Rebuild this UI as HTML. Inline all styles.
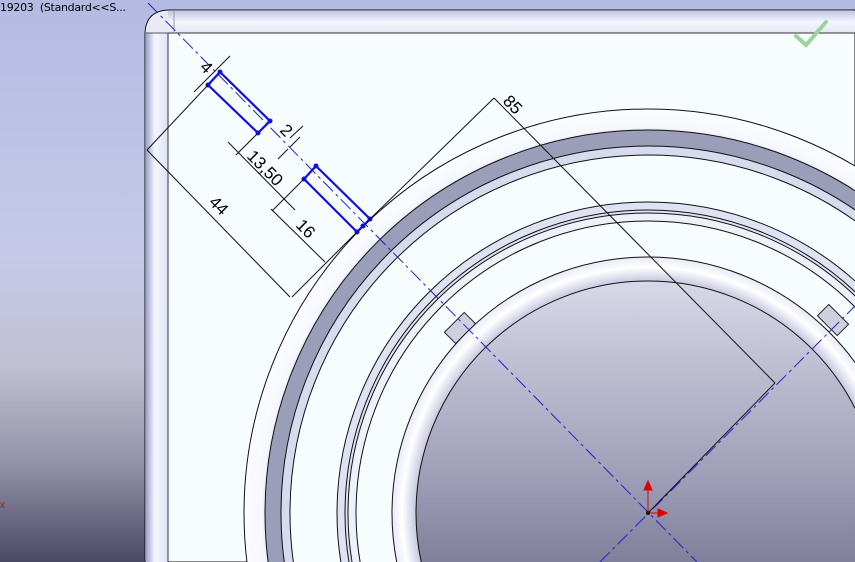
<!DOCTYPE html>
<html><head><style>
html,body{margin:0;padding:0;width:855px;height:562px;overflow:hidden}
body{position:relative;background:linear-gradient(#b4bae2 0%,#c6cae8 45%,#c0c0d4 65%,#9494aa 82%,#4a4a66 100%);font-family:"Liberation Sans",sans-serif}
svg{position:absolute;left:0;top:0;display:block;overflow:hidden}
.t{position:absolute;left:0;top:2px;font-size:11px;color:#000;font-family:"DejaVu Sans",sans-serif;letter-spacing:-0.3px;line-height:12px}
</style></head><body>
<svg width="855" height="562" viewBox="0 0 855 562">
<defs>
<linearGradient id="lv" x1="0" x2="1"><stop offset="0" stop-color="#9ea2c8"/><stop offset="0.4" stop-color="#f4f6ff"/><stop offset="1" stop-color="#dfe2f4"/></linearGradient>
<linearGradient id="th" x1="0" y1="0" x2="0" y2="1"><stop offset="0" stop-color="#c4c8e4"/><stop offset="0.5" stop-color="#f4f6ff"/><stop offset="1" stop-color="#e4e6f4"/></linearGradient>
<linearGradient id="hole" x1="0" y1="0" x2="0" y2="1"><stop offset="0" stop-color="#d8d8e8"/><stop offset="0.45" stop-color="#9a9ab4"/><stop offset="1" stop-color="#3c3c58"/></linearGradient>
<radialGradient id="r1" cx="648" cy="513" r="404" gradientUnits="userSpaceOnUse"><stop offset="0.93" stop-color="#bfc2dc"/><stop offset="0.955" stop-color="#f6f8ff"/><stop offset="1" stop-color="#fbfcff"/></radialGradient>
<radialGradient id="r2" cx="648" cy="513" r="256" gradientUnits="userSpaceOnUse"><stop offset="0.9" stop-color="#c0c2dc"/><stop offset="0.96" stop-color="#ffffff"/><stop offset="1" stop-color="#e8eaf6"/></radialGradient>
</defs>
<path d="M145 562 V35 Q145 10 170 10 H855 V562 Z" fill="#f7fcff" stroke="#111" stroke-width="1"/>
<rect x="146" y="33" width="22" height="529" fill="url(#lv)"/>
<rect x="168" y="11" width="687" height="22" fill="url(#th)"/>
<path d="M146 35 Q146 11 170 11 H168 V33 H146Z" fill="#e8eaf6"/>
<line x1="168" y1="33" x2="168" y2="562" stroke="#333"/>
<line x1="168" y1="33" x2="855" y2="33" stroke="#333"/>
<line x1="146" y1="33" x2="168" y2="33" stroke="#555"/>
<line x1="174" y1="11" x2="174" y2="33" stroke="#999"/>
<circle cx="648" cy="513" r="404" fill="url(#r1)" stroke="#111"/>
<circle cx="648" cy="513" r="383" fill="#9a9eb8" stroke="#111"/>
<circle cx="648" cy="513" r="367" fill="#d8dbee" stroke="#111"/>
<circle cx="648" cy="513" r="358" fill="#f7fcff" stroke="#111"/>
<circle cx="648" cy="513" r="311" fill="#dfe2f2" stroke="#111"/>
<circle cx="648" cy="513" r="303" fill="none" stroke="#111"/>
<circle cx="648" cy="513" r="300" fill="#eef0fa" stroke="#111"/>
<circle cx="648" cy="513" r="292" fill="#f7fcff" stroke="#111"/>
<g fill="#cfcfe0" stroke="#222">
<rect x="-8" y="-14" width="16" height="28" transform="translate(460,328) rotate(45)"/>
<rect x="-8" y="-14" width="16" height="28" transform="translate(833,320) rotate(-45)"/>
</g>
<circle cx="648" cy="513" r="256" fill="url(#r2)" stroke="#111"/>
<circle cx="648" cy="513" r="232" fill="url(#hole)" stroke="#111"/>
<g stroke="#2020d0" stroke-width="1" stroke-dasharray="14,4,3,4" fill="none">
<line x1="148" y1="3" x2="697" y2="562"/>
<line x1="600" y1="562" x2="855" y2="306"/>
</g>
<g stroke="#1010e0" stroke-width="2.2" fill="none">
<path d="M220 72 L270 121 L258 133 L208 85 Z"/>
<path d="M316 166 L370 219 L357 232 L304 179 Z"/>
</g>
<g fill="#1010e0">
<circle cx="220" cy="72" r="2.5"/><circle cx="270" cy="121" r="2.5"/><circle cx="258" cy="133" r="2.5"/><circle cx="208" cy="85" r="2.5"/>
<circle cx="316" cy="166" r="2.5"/><circle cx="370" cy="219" r="2.5"/><circle cx="357" cy="232" r="2.5"/><circle cx="304" cy="179" r="2.5"/><circle cx="363" cy="226" r="2.5"/>
</g>
<g stroke="#111" stroke-width="1" fill="none">
<line x1="208" y1="85" x2="147" y2="150"/>
<line x1="147" y1="150" x2="290" y2="297"/>
<line x1="357" y1="232" x2="292" y2="297"/>
<line x1="258" y1="133" x2="236" y2="155"/>
<line x1="228" y1="142" x2="295" y2="210"/>
<line x1="304" y1="179" x2="272" y2="211"/>
<line x1="271" y1="209" x2="325" y2="262"/>
<line x1="290" y1="147" x2="300" y2="137"/>
<line x1="278" y1="159" x2="288" y2="149"/>
<line x1="290" y1="138" x2="303" y2="126"/>
<line x1="194" y1="92" x2="230" y2="56"/>
<line x1="494" y1="98" x2="775" y2="383"/>
<line x1="494" y1="98" x2="367" y2="222"/>
<line x1="775" y1="383" x2="648" y2="513"/>
</g>
<g fill="#000" font-family="Liberation Sans,sans-serif" font-size="17">
<text transform="translate(199,68) rotate(45)">4</text>
<text transform="translate(279,131) rotate(45)">2</text>
<text transform="translate(246,157) rotate(45)">13,50</text>
<text transform="translate(295,226) rotate(45)">16</text>
<text transform="translate(208,203) rotate(45)">44</text>
<text transform="translate(502,102) rotate(45)">85</text>
</g>
<g fill="#e00000" stroke="#e00000">
<line x1="648" y1="513" x2="648" y2="487"/><path d="M644 490 L648 481 L652 490Z"/>
<line x1="648" y1="513" x2="660" y2="513"/><path d="M658 509 L667 513 L658 517Z"/>
</g>
<circle cx="648" cy="513" r="2" fill="#111"/>
<path d="M796 36 L806 45 L826 22" stroke="#9ad49a" stroke-width="4" fill="none" stroke-linecap="round"/>
<text x="0" y="508" fill="#e00000" font-size="10">x</text>
</svg>
<div class="t">19203&nbsp; (Standard&lt;&lt;S...</div>
</body></html>
